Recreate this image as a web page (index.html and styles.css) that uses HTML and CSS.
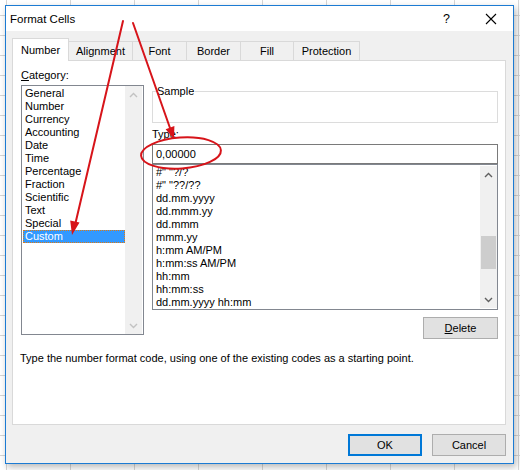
FILE: index.html
```html
<!DOCTYPE html>
<html>
<head>
<meta charset="utf-8">
<link rel="stylesheet" href="styles.css">
</head>
<body>
<div class="dialog">
  <div class="titlebar">
    <span class="title">Format Cells</span>
    <span class="help">?</span>
    <svg class="close" width="12" height="12" viewBox="0 0 12 12"><path d="M1 1 L11 11 M11 1 L1 11" stroke="#000" stroke-width="1.1" fill="none"/></svg>
  </div>
  <div class="content">
    <div class="tabs">
      <div class="tab active t-number">Number</div>
      <div class="tab t-align">Alignment</div>
      <div class="tab t-font">Font</div>
      <div class="tab t-border">Border</div>
      <div class="tab t-fill">Fill</div>
      <div class="tab t-prot">Protection</div>
    </div>
    <div class="panel">
      <div class="columns">
        <div class="left">
          <div class="label"><u>C</u>ategory:</div>
          <div class="listbox cat">
            <ul class="items">
              <li>General</li>
              <li>Number</li>
              <li>Currency</li>
              <li>Accounting</li>
              <li>Date</li>
              <li>Time</li>
              <li>Percentage</li>
              <li>Fraction</li>
              <li>Scientific</li>
              <li>Text</li>
              <li>Special</li>
              <li class="selected">Custom</li>
            </ul>
            <div class="scrollbar disabled">
              <div class="sb-btn"><svg width="9" height="6" viewBox="0 0 9 6"><path d="M1 5 L4.5 1.5 L8 5" stroke="#c2c2c2" stroke-width="1.4" fill="none"/></svg></div>
              <div class="sb-track"></div>
              <div class="sb-btn"><svg width="9" height="6" viewBox="0 0 9 6"><path d="M1 1 L4.5 4.5 L8 1" stroke="#c2c2c2" stroke-width="1.4" fill="none"/></svg></div>
            </div>
          </div>
        </div>
        <div class="right">
          <fieldset class="sample">
            <legend>Sample</legend>
            <div class="sample-body"></div>
          </fieldset>
          <div class="label type-label">Type:</div>
          <div class="input">0,00000</div>
          <div class="listbox fmt">
            <ul class="items">
              <li>#" "?/?</li>
              <li>#" "??/??</li>
              <li>dd.mm.yyyy</li>
              <li>dd.mmm.yy</li>
              <li>dd.mmm</li>
              <li>mmm.yy</li>
              <li>h:mm AM/PM</li>
              <li>h:mm:ss AM/PM</li>
              <li>hh:mm</li>
              <li>hh:mm:ss</li>
              <li>dd.mm.yyyy hh:mm</li>
            </ul>
            <div class="scrollbar">
              <div class="sb-btn"><svg width="9" height="6" viewBox="0 0 9 6"><path d="M1 5 L4.5 1.5 L8 5" stroke="#606060" stroke-width="1.4" fill="none"/></svg></div>
              <div class="sb-track"><div class="sb-thumb"></div></div>
              <div class="sb-btn"><svg width="9" height="6" viewBox="0 0 9 6"><path d="M1 1 L4.5 4.5 L8 1" stroke="#606060" stroke-width="1.4" fill="none"/></svg></div>
            </div>
          </div>
          <div class="btnrow"><button class="btn"><u>D</u>elete</button></div>
        </div>
      </div>
      <p class="desc">Type the number format code, using one of the existing codes as a starting point.</p>
    </div>
    <div class="footer">
      <button class="btn default">OK</button>
      <button class="btn">Cancel</button>
    </div>
  </div>
</div>
<svg class="annot" width="520" height="470" viewBox="0 0 520 470">
  <g stroke="#d7141a" stroke-width="2" fill="none" stroke-linecap="round">
    <line x1="123" y1="21" x2="75.5" y2="223"/>
    <line x1="133" y1="23" x2="170" y2="128"/>
    <ellipse cx="181" cy="153" rx="40" ry="15.5" transform="rotate(-4 181 153)"/>
  </g>
  <g fill="#d7141a">
    <polygon points="72,235 79.5,222.5 70.2,220.6"/>
    <polygon points="174,139 174.4,126 165.6,129.2"/>
  </g>
</svg>
</body>
</html>
```

FILE: styles.css
```css
* { box-sizing: border-box; }
html, body { margin: 0; }
body {
  width: 520px;
  height: 470px;
  overflow: hidden;
  padding: 5px 0 0 5px;
  font-family: "Liberation Sans", Arial, sans-serif;
  font-size: 11px;
  color: #000;
  background-color: #fff;
  background-image:
    linear-gradient(to right, #d6d6d6 1px, transparent 1px),
    linear-gradient(to bottom, #d6d6d6 1px, transparent 1px);
  background-size: 64px 100%, 100% 20px;
  background-position: 6px 0, 0 15px;
}
.dialog {
  width: 509px;
  height: 459px;
  border: 1px solid #1c7bd3;
  background: #f0f0f0;
  box-shadow: 2px 3px 7px rgba(0,0,0,0.28);
  display: flex;
  flex-direction: column;
}
.titlebar {
  height: 25px;
  background: #fff;
  display: flex;
  align-items: center;
  padding-left: 4px;
}
.title { flex: 1; line-height: 16px; font-size: 11.5px; }
.help { width: 10px; margin-right: 32px; font-size: 12.5px; }
.close { margin-right: 16px; }
.content {
  padding: 7px 0 0 6px;
  flex: 1;
  display: flex;
  flex-direction: column;
}
.tabs {
  display: flex;
  align-items: flex-end;
  height: 22px;
  padding-left: 1px;
}
.tab {
  height: 19px;
  border: 1px solid #d9d9d9;
  border-bottom: none;
  margin-left: -1px;
  background: #f0f0f0;
  display: flex;
  align-items: center;
  justify-content: center;
  line-height: 14px;
}
.tab.active {
  height: 23px;
  background: #fff;
  margin-bottom: -1px;
  position: relative;
  z-index: 1;
}
.t-number { width: 57px; }
.t-align { width: 65px; }
.t-font { width: 55px; }
.t-border { width: 55px; }
.t-fill { width: 54px; }
.t-prot { width: 67px; }
.panel {
  width: 494px;
  height: 365px;
  background: #fff;
  border: 1px solid #d9d9d9;
  padding: 5px 0 0 8px;
}
.columns { display: flex; gap: 8px; }
.left { width: 123px; }
.right { width: 346px; }
.label { height: 19px; line-height: 14px; padding-top: 2px; }
.listbox {
  border: 1px solid #828790;
  background: #fff;
  display: flex;
}
.listbox.cat { height: 250px; }
.items {
  list-style: none;
  margin: 0;
  padding: 1px 0 0 1px;
  flex: 1;
}
.items li {
  height: 13px;
  line-height: 13px;
  padding-left: 2px;
  white-space: nowrap;
}
.items li.selected {
  background: #3399ff;
  color: #fff;
  outline: 1px dotted #e07a10;
  outline-offset: -1px;
}
.scrollbar {
  width: 17px;
  background: #f0f0f0;
  display: flex;
  flex-direction: column;
  margin: 0 1px 0 0;
}
.sb-btn {
  height: 17px;
  display: flex;
  align-items: center;
  justify-content: center;
}
.sb-track { flex: 1; }
.sb-thumb {
  margin: 53px 1px 0 1px;
  height: 33px;
  background: #cdcdcd;
}
.sample {
  margin: 17px 0 0 0;
  padding: 0;
  border: 1px solid #dcdcdc;
  min-width: 0;
}
.sample legend {
  padding: 0 1px;
  margin-left: 3px;
  line-height: 16px;
}
.sample-body { height: 23px; }
.type-label { margin-top: 2px; height: 19px; line-height: 19px; padding-top: 0; }
.input {
  height: 20px;
  border: 1px solid #7a7a7a;
  padding-left: 3px;
  line-height: 18px;
}
.listbox.fmt { height: 146px; }
.listbox.fmt .items { padding-left: 1px; }
.listbox.fmt .scrollbar { margin: 1px 0 1px 0; }
.btnrow { display: flex; justify-content: flex-end; margin-top: 7px; }
.btn {
  font-family: inherit;
  font-size: 11px;
  color: #000;
  width: 75px;
  height: 22px;
  background: #e1e1e1;
  border: 1px solid #adadad;
  padding: 0;
  line-height: 18px;
}
.desc { margin: 12px 0 0 -1px; line-height: 14px; }
.footer {
  display: flex;
  justify-content: flex-end;
  gap: 10px;
  padding: 9px 7px 0 0;
}
.footer .btn { width: 74px; }
.btn.default { border: 2px solid #0078d7; }
.annot {
  position: absolute;
  left: 0;
  top: 0;
  pointer-events: none;
}
```
